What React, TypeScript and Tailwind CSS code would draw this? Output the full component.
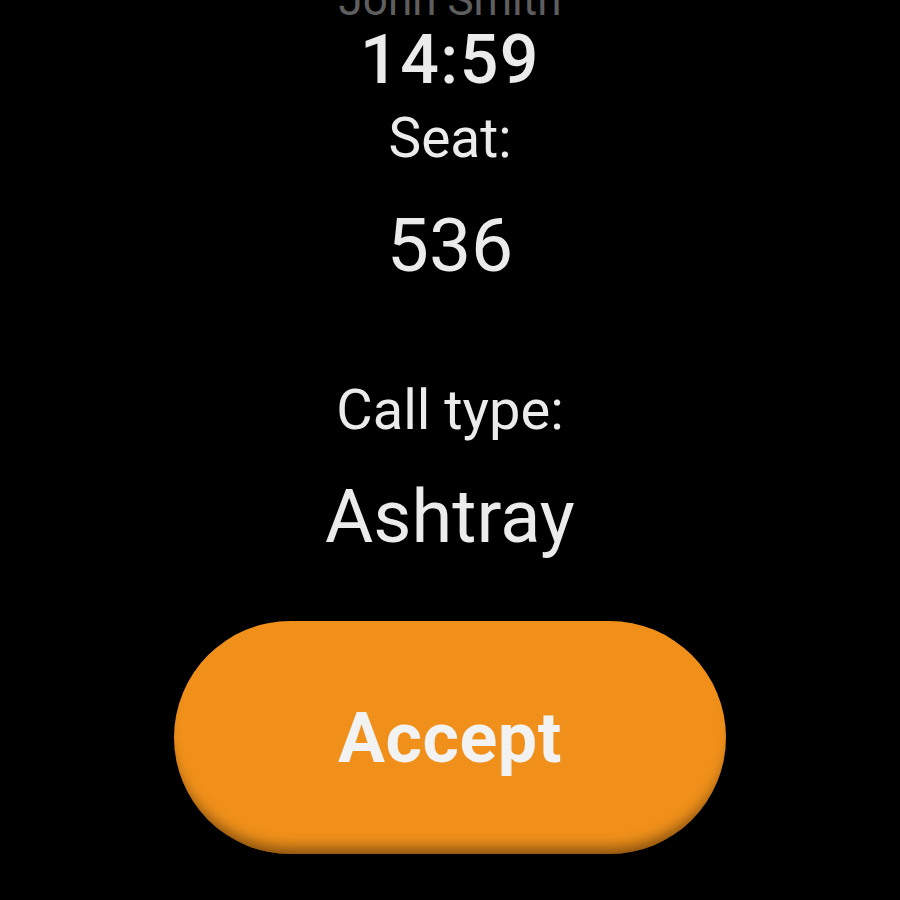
export default function App() {
  return (
    <div className="relative h-[900px] w-[900px] overflow-hidden bg-black font-['Roboto',sans-serif] text-[#ebebeb]">
      <div className="flex flex-col items-center">
        {/* name line, scrolled mostly out of view */}
        <div className="mt-[-22px] text-[44px] leading-none text-[#5e5e5e]">John Smith</div>
        <div className="mt-[4px] text-[68px] font-medium leading-none tracking-[1.5px]">14:59</div>
        <div className="mt-[17px] text-[55px] leading-none">Seat:</div>
        <div className="mt-[42px] text-[75px] leading-none">536</div>
        <div className="mt-[99px] text-[56px] leading-none">Call type:</div>
        <div className="mt-[42px] text-[74px] leading-none">Ashtray</div>
        <button className="mt-[67px] flex h-[233px] w-[552px] items-center justify-center rounded-full bg-[#f0901a] shadow-[inset_0_-14px_14px_-8px_rgba(0,0,0,0.45)]">
          <span className="text-[70px] font-bold leading-none tracking-[0.5px] text-[#f2f2f2]">Accept</span>
        </button>
      </div>
    </div>
  );
}
